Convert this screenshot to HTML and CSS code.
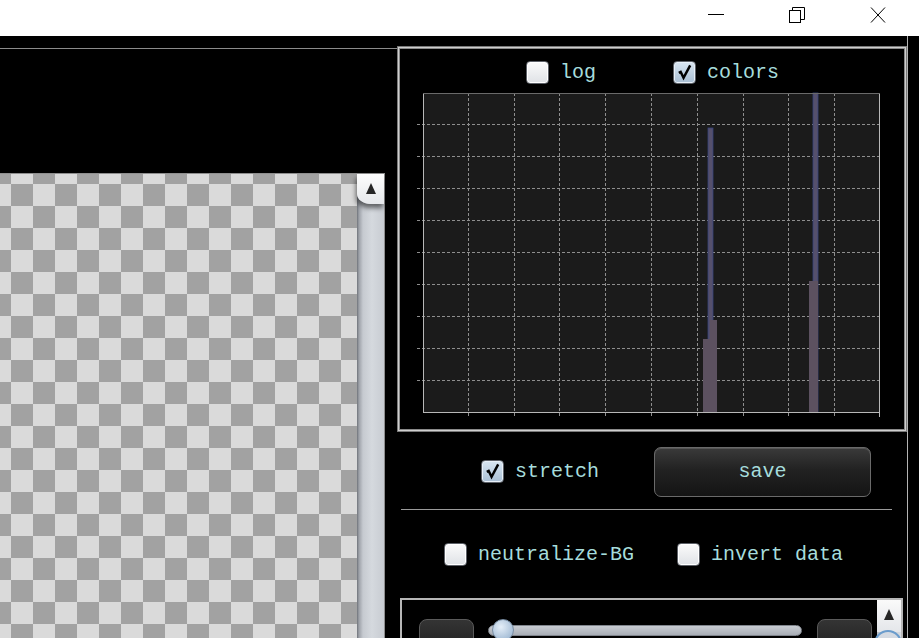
FILE: index.html
```html
<!DOCTYPE html>
<html lang="en">
<head>
  <meta charset="UTF-8">
  <title>Viewer</title>
  <meta name="viewport" content="width=device-width, initial-scale=1.0">
  <link rel="stylesheet" href="styles.css">
</head>
<body>

  <div class="titlebar">
    <div class="winbtn">
      <svg width="16" height="16" viewBox="0 0 16 16"><line x1="0" y1="7.5" x2="16" y2="7.5" stroke="#000" stroke-width="1"/></svg>
    </div>
    <div class="winbtn">
      <svg width="16" height="16" viewBox="0 0 16 16" fill="none" stroke="#000" stroke-width="1">
        <rect x="0.5" y="3.5" width="11" height="12"/>
        <polyline points="3.5,3.5 3.5,0.5 15.5,0.5 15.5,12.5 11.5,12.5"/>
      </svg>
    </div>
    <div class="winbtn">
      <svg width="16" height="16" viewBox="0 0 16 16" stroke="#000" stroke-width="1"><line x1="1" y1="0.5" x2="15" y2="15.5"/><line x1="15" y1="0.5" x2="1" y2="15.5"/></svg>
    </div>
  </div>

  <div class="app">
    <div class="left">
      <div class="viewer">
        <div class="checker"></div>
        <div class="vscroll">
          <div class="vscroll-btn"><span class="arrow-up"></span></div>
        </div>
      </div>
    </div>

    <div class="right">
      <div class="histo">
        <div class="opts opts-top">
          <label class="opt"><span class="cb"></span>log</label>
          <label class="opt"><span class="cb on"><svg viewBox="0 0 20 20"><path d="M4 10.5 L6 9.5 L9 15.5 L16 2.5" fill="none" stroke="#000" stroke-width="2.6"/></svg></span>colors</label>
        </div>
        <svg class="chart" width="472" height="332" viewBox="0 0 472 332">
          <rect x="10" y="5" width="457" height="319" fill="#1b1b1b"/>
          <g stroke="#8e8e8e" stroke-width="1" stroke-dasharray="3 2">
            <line x1="55.5" y1="5" x2="55.5" y2="329"/>
            <line x1="101.5" y1="5" x2="101.5" y2="329"/>
            <line x1="146.5" y1="5" x2="146.5" y2="329"/>
            <line x1="192.5" y1="5" x2="192.5" y2="329"/>
            <line x1="238.5" y1="5" x2="238.5" y2="329"/>
            <line x1="284.5" y1="5" x2="284.5" y2="329"/>
            <line x1="330.5" y1="5" x2="330.5" y2="329"/>
            <line x1="375.5" y1="5" x2="375.5" y2="329"/>
            <line x1="421.5" y1="5" x2="421.5" y2="329"/>
            <line x1="4" y1="36.5" x2="467" y2="36.5"/>
            <line x1="4" y1="68.5" x2="467" y2="68.5"/>
            <line x1="4" y1="100.5" x2="467" y2="100.5"/>
            <line x1="4" y1="132.5" x2="467" y2="132.5"/>
            <line x1="4" y1="164.5" x2="467" y2="164.5"/>
            <line x1="4" y1="196.5" x2="467" y2="196.5"/>
            <line x1="4" y1="228.5" x2="467" y2="228.5"/>
            <line x1="4" y1="260.5" x2="467" y2="260.5"/>
            <line x1="4" y1="292.5" x2="467" y2="292.5"/>
          </g>
          <rect x="295" y="40" width="5" height="284" fill="#55506c" stroke="#36417a" stroke-width="0.8"/>
          <rect x="290" y="251" width="7" height="73" fill="#5c5160"/>
          <rect x="297" y="232" width="7" height="92" fill="#5c5160"/>
          <rect x="400" y="5" width="5" height="319" fill="#55506c" stroke="#36417a" stroke-width="0.8"/>
          <rect x="396" y="193" width="9" height="131" fill="#5c5160"/>
          <g stroke="#b8b8b8" stroke-width="1" fill="none">
            <line x1="10.5" y1="5" x2="10.5" y2="325"/>
            <line x1="10" y1="324.5" x2="467" y2="324.5"/>
            <line x1="466.5" y1="5" x2="466.5" y2="329"/>
            <line x1="10" y1="5.5" x2="467" y2="5.5" stroke="#6a6a6a"/>
          </g>
        </svg>
      </div>

      <div class="row-save">
        <label class="opt"><span class="cb on"><svg viewBox="0 0 20 20"><path d="M4 10.5 L6 9.5 L9 15.5 L16 2.5" fill="none" stroke="#000" stroke-width="2.6"/></svg></span>stretch</label>
        <button class="btn-save">save</button>
      </div>

      <div class="sep"></div>

      <div class="opts opts-mid">
        <label class="opt"><span class="cb"></span>neutralize-BG</label>
        <label class="opt"><span class="cb"></span>invert data</label>
      </div>

      <div class="slider-box">
        <div class="small-btn"></div>
        <div class="track"><span class="knob"></span></div>
        <div class="small-btn"></div>
        <div class="vscroll vscroll-small">
          <div class="vscroll-btn flat"><span class="arrow-up"></span></div>
          <span class="round-knob"></span>
        </div>
      </div>
    </div>
  </div>

</body>
</html>
```

FILE: styles.css
```css
body {
  margin: 0;
  width: 919px;
  height: 638px;
  overflow: hidden;
  background-color: #000000;
  font-family: "Liberation Mono", "DejaVu Sans Mono", monospace;
  font-size: 20px;
  color: #a6dcdc;
}

.titlebar {
  height: 36px;
  background-color: #ffffff;
  display: flex;
  justify-content: flex-end;
  padding-right: 1px;
}

.winbtn {
  width: 81px;
  display: flex;
  justify-content: center;
  padding-top: 7px;
  box-sizing: border-box;
}

.app {
  display: flex;
  height: 602px;
  overflow: hidden;
}

/* left side: image viewer */
.left {
  width: 397px;
  margin-top: 12px;
  border-top: 1px solid #8c8c8c;
  display: flex;
  flex-direction: column;
}

.viewer {
  margin-top: 124px;
  width: 385px;
  flex: 1;
  display: flex;
  border-top: 1px solid #8e8e8e;
  border-right: 1px solid #8e8e8e;
  box-sizing: border-box;
}

.checker {
  width: 357px;
  background-color: #dadada;
  background-image: conic-gradient(#a2a2a2 25%, #dadada 0 50%, #a2a2a2 0 75%, #dadada 0);
  background-size: 44px 44px;
  background-position: -11px 10px;
}

.vscroll {
  flex: 1;
  position: relative;
  background: linear-gradient(to right, #6f737a 0, #9da1a8 2px, #c6cad0 6px, #d5d9de 55%, #c8ccd2 100%);
}

.vscroll-btn {
  height: 30px;
  background: linear-gradient(to bottom, #fdfdfd, #e6e8eb);
  border-bottom-left-radius: 14px 10px;
  box-shadow: -1px 4px 5px rgba(0, 0, 0, 0.55);
  display: flex;
  justify-content: center;
  padding-top: 9px;
  box-sizing: border-box;
}

.arrow-up {
  width: 0;
  height: 0;
  border-left: 5px solid transparent;
  border-right: 5px solid transparent;
  border-bottom: 11px solid #262626;
}

/* right side: controls */
.right {
  width: 511px;
  border-right: 1px solid #b4b4b4;
  box-sizing: border-box;
  display: flex;
  flex-direction: column;
}

.right > * {
  flex-shrink: 0;
}

.histo {
  margin-top: 10px;
  width: 510px;
  height: 386px;
  box-sizing: border-box;
  border: 1px solid #7a7a7a;
  box-shadow: inset 0 0 0 1px #cfcfcf, inset 0 0 0 2px #8a8a8a;
  padding-top: 12px;
}

.opts {
  display: flex;
  align-items: center;
}

.opts-top {
  height: 26px;
  justify-content: center;
  gap: 77px;
  padding-left: 1px;
}

.opt {
  display: flex;
  align-items: center;
  gap: 11px;
  white-space: nowrap;
}

.cb {
  width: 23px;
  height: 23px;
  box-sizing: border-box;
  border: 1px solid #5d6168;
  border-radius: 4px;
  background: linear-gradient(to bottom, #fbfbfb, #dfe2e6);
  box-shadow: inset 0 0 0 1px #ffffff;
  display: flex;
  align-items: center;
  justify-content: center;
}

.cb.on {
  background: linear-gradient(to bottom, #d9e6f2, #a9bfd4);
  box-shadow: inset 0 0 0 1px #e8f0f8;
}

.cb svg {
  width: 19px;
  height: 19px;
}

.chart {
  display: block;
  margin-top: 3px;
  margin-left: 15px;
}

.row-save {
  height: 77px;
  display: flex;
  align-items: center;
  padding-left: 84px;
  padding-top: 2px;
  box-sizing: border-box;
}

.btn-save {
  margin-left: 55px;
  width: 217px;
  height: 50px;
  border: 1px solid #6a6a6a;
  border-radius: 7px;
  background: linear-gradient(to bottom, #3a3a3a, #222222 45%, #141414);
  box-shadow: inset 0 1px 0 #555;
  color: #a6dcdc;
  font-family: inherit;
  font-size: 20px;
  cursor: pointer;
}

.sep {
  margin-left: 4px;
  width: 491px;
  height: 1px;
  background-color: #9a9a9a;
}

.opts-mid {
  height: 88px;
  padding-left: 47px;
  gap: 43px;
}

.slider-box {
  margin-left: 3px;
  width: 503px;
  height: 60px;
  box-sizing: border-box;
  border: 2px solid #b6b6b6;
  border-bottom: none;
  display: flex;
  align-items: flex-start;
}

.small-btn {
  margin-top: 19px;
  width: 55px;
  height: 40px;
  box-sizing: border-box;
  border: 1px solid #5a5a5a;
  border-radius: 8px;
  background: linear-gradient(to bottom, #343434, #1c1c1c);
}

.small-btn:first-child {
  margin-left: 17px;
}

.track {
  position: relative;
  margin: 25px 15px 0 14px;
  width: 315px;
  height: 11px;
  box-sizing: border-box;
  border: 1px solid #80858d;
  border-radius: 6px;
  background: linear-gradient(to bottom, #c8ccd2, #a9aeb6);
}

.knob {
  position: absolute;
  left: 3px;
  top: -7px;
  width: 22px;
  height: 22px;
  box-sizing: border-box;
  border-radius: 50%;
  border: 1px solid #7a8ea4;
  background: radial-gradient(circle at 40% 35%, #e4eef8, #a9c0d8 70%);
}

.vscroll-small {
  flex: 0 0 24px;
  margin-left: 5px;
  align-self: stretch;
  background: linear-gradient(to right, #b9bdc4, #d7dbe0);
}

.vscroll-btn.flat {
  height: 32px;
  border-radius: 0;
  box-shadow: none;
  background: linear-gradient(to bottom, #fafafa, #e4e6ea);
}

.round-knob {
  position: absolute;
  left: -3px;
  top: 30px;
  width: 28px;
  height: 28px;
  box-sizing: border-box;
  border-radius: 50%;
  border: 2px solid #6a9ccc;
  background: #d4dae2;
}
```
